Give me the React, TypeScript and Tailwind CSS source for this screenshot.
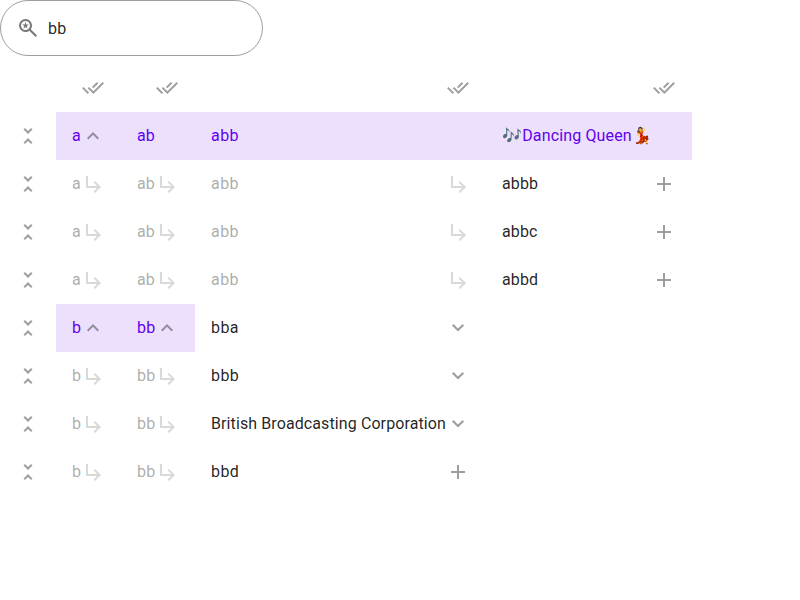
const PATHS = {
  saved:
    'M784-120 532-372q-30 24-69 38t-83 14q-109 0-184.500-75.500T120-580q0-109 75.500-184.500T380-840q109 0 184.500 75.500T640-580q0 44-14 83t-38 69l252 252-56 56ZM380-400q75 0 127.500-52.500T560-580q0-75-52.500-127.500T380-760q-75 0-127.500 52.500T200-580q0 75 52.500 127.500T380-400Zm-83-55 32-105-86-62h105l32-108 32 108h105l-86 62 32 105-83-64-83 64Z',
  doneAll:
    'M268-240 42-466l57-56 170 170 56 56-57 56Zm226 0L268-466l56-57 170 170 368-368 56 57-424 424Zm0-226-57-56 198-198 57 56-198 198Z',
  unfoldLess:
    'm356-160-56-56 180-180 180 180-56 56-124-124-124 124Zm124-404L300-744l56-56 124 124 124-124 56 56-180 180Z',
  up: 'M480-528 296-344l-56-56 240-240 240 240-56 56-184-184Z',
  down: 'M480-344 240-584l56-56 184 184 184-184 56 56-240 240Z',
  child: 'm560-120-57-57 144-143H200v-480h80v400h367L503-544l56-57 241 241-240 240Z',
  add: 'M440-440H200v-80h240v-240h80v240h240v80H520v240h-80v-240Z',
};

type IconName = keyof typeof PATHS;

function Icon({ name, className = 'text-black/38' }: { name: IconName; className?: string }) {
  return (
    <svg viewBox="0 -960 960 960" className={`size-6 shrink-0 ${className}`} fill="currentColor">
      <path d={PATHS[name]} />
    </svg>
  );
}

type Tone = 'active' | 'muted' | 'normal';
type CellData = { text?: string; icon?: IconName; tone?: Tone; tracking?: string };

const TONES: Record<Tone, string> = {
  active: 'bg-[#6200ee]/12 text-[#6200ee]',
  muted: 'text-black/87 opacity-38',
  normal: 'text-black/87',
};

const WIDE = 'tracking-[0.45px]';
const TIGHT = 'tracking-[0.1px]';

const muted = (text: string, tracking?: string): CellData => ({ text, icon: 'child', tone: 'muted', tracking });
const active = (text: string, icon?: IconName, tracking?: string): CellData => ({
  text,
  icon,
  tone: 'active',
  tracking,
});

const ROWS: CellData[][] = [
  [active('a', 'up'), active('ab'), active('abb', undefined, WIDE), active('🎶Dancing Queen💃')],
  [muted('a'), muted('ab'), muted('abb', WIDE), { text: 'abbb', icon: 'add' }],
  [muted('a'), muted('ab'), muted('abb', WIDE), { text: 'abbc', icon: 'add' }],
  [muted('a'), muted('ab'), muted('abb', WIDE), { text: 'abbd', icon: 'add' }],
  [active('b', 'up'), active('bb', 'up'), { text: 'bba', icon: 'down', tracking: WIDE }, {}],
  [muted('b'), muted('bb'), { text: 'bbb', icon: 'down', tracking: WIDE }, {}],
  [muted('b'), muted('bb'), { text: 'British Broadcasting Corporation', icon: 'down', tracking: TIGHT }, {}],
  [muted('b'), muted('bb'), { text: 'bbd', icon: 'add', tracking: WIDE }, {}],
];

function Cell({ text, icon, tone = 'normal', tracking = 'tracking-[0.15px]' }: CellData) {
  return (
    <div
      className={`flex h-12 min-w-0 items-center justify-between px-4 whitespace-nowrap ${tracking} ${TONES[tone]}`}
    >
      <span className="min-w-0">{text}</span>
      {icon && <Icon name={icon} />}
    </div>
  );
}

export default function App() {
  return (
    <div className="h-[600px] w-[800px] overflow-hidden bg-white font-['Roboto',sans-serif] text-base leading-6">
      <label className="flex h-14 w-[263px] items-center gap-2 rounded-full border border-black/38 px-[15px]">
        <Icon name="saved" className="text-black/54" />
        <input
          defaultValue="bb"
          className="h-7 w-full min-w-0 bg-transparent pt-px tracking-[0.15px] text-black/87 outline-none"
        />
      </label>
      <div className="mt-2 grid w-[692px] grid-cols-[56px_65px_74px_291px_206px]">
        <div className="h-12" />
        {[0, 1, 2, 3].map((column) => (
          <div key={column} className="flex h-12 items-center justify-end px-4">
            <Icon name="doneAll" />
          </div>
        ))}
        {ROWS.map((row, index) => (
          <div key={index} className="contents">
            <div className="flex h-12 items-center px-4">
              <Icon name="unfoldLess" />
            </div>
            {row.map((cell, column) => (
              <Cell key={column} {...cell} />
            ))}
          </div>
        ))}
      </div>
    </div>
  );
}
